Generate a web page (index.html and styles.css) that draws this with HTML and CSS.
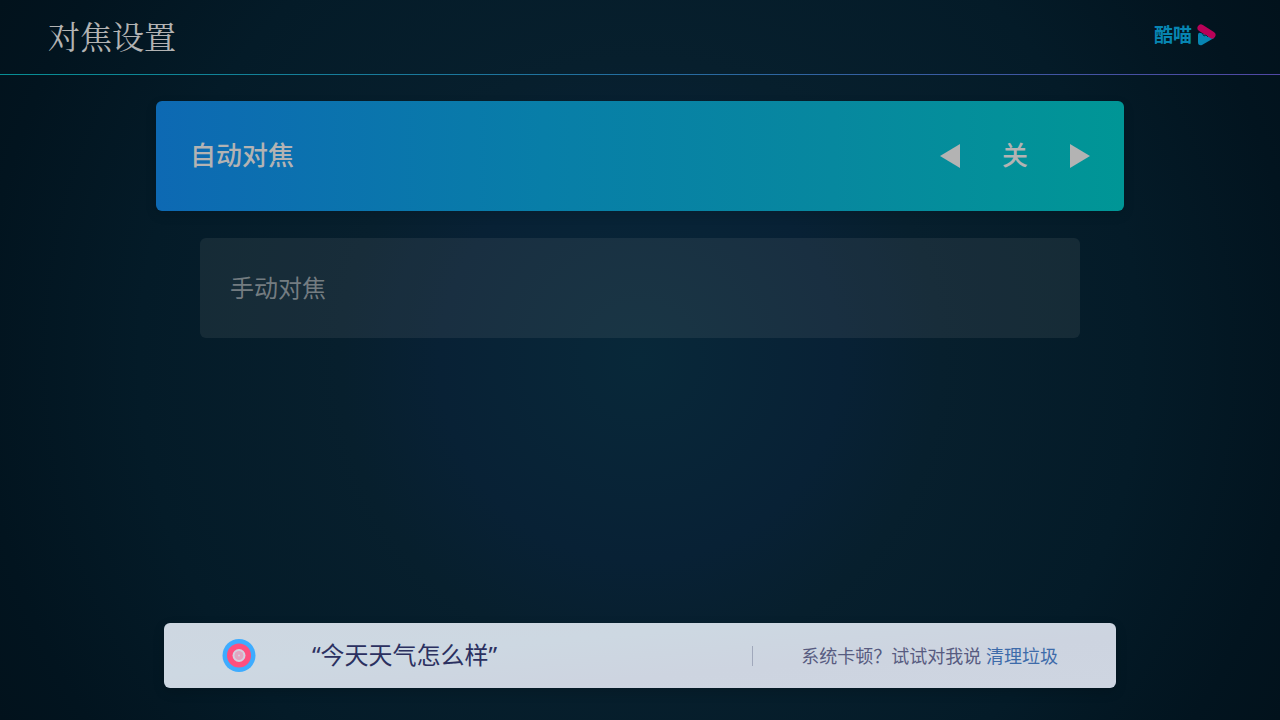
FILE: index.html
```html
<!DOCTYPE html>
<html lang="zh-CN">
<head>
    <meta charset="UTF-8">
    <meta name="viewport" content="width=device-width, initial-scale=1.0">
    <title>对焦设置</title>
    <link rel="stylesheet" href="styles.css">
</head>
<body>

    <header class="header">
        <h1 class="title">对焦设置</h1>
        <div class="brand">
            <span class="brand-name">酷喵</span>
            <svg class="brand-mark" width="20" height="22" viewBox="0 0 20 22" aria-hidden="true">
                <path d="M2 11 Q2 8 5 9 L18 14 L6 21 Q2 22 2 18 Z" fill="#0785b2"/>
                <path d="M5 4 L16 11" stroke="#b90258" stroke-width="7" stroke-linecap="round"/>
                <path d="M6 9 L8 12 L10 11 L12 13" fill="none" stroke="#04334a" stroke-width="1"/>
            </svg>
        </div>
    </header>

    <main class="settings">
        <div class="item active">
            <span class="item-label" id="autoFocusLabel">自动对焦</span>
            <div class="switcher" role="group" aria-labelledby="autoFocusLabel">
                <button type="button" class="arrow" aria-label="上一项">
                    <svg width="20" height="24" viewBox="0 0 20 24"><path d="M0 12 L20 0 V24 Z"/></svg>
                </button>
                <span class="value" id="autoFocusValue">关</span>
                <button type="button" class="arrow" aria-label="下一项">
                    <svg width="20" height="24" viewBox="0 0 20 24"><path d="M20 12 L0 0 V24 Z"/></svg>
                </button>
            </div>
        </div>

        <button type="button" class="item manual">手动对焦</button>
    </main>

    <!-- 语音助手提示 -->
    <footer class="voice-bar">
        <svg class="voice-icon" width="34" height="34" viewBox="0 0 34 34" aria-hidden="true">
            <circle cx="17" cy="16.5" r="16.5" fill="#3eacff"/>
            <circle cx="17" cy="16.5" r="12" fill="#ff4f7e"/>
            <circle cx="17" cy="16.5" r="6.5" fill="#d3d2e0"/>
            <circle cx="17" cy="16.5" r="4.5" fill="#e1a6c1"/>
            <circle cx="17" cy="16.5" r="1" fill="#d3d2e0"/>
        </svg>
        <p class="voice-text">“今天天气怎么样”</p>
        <p class="voice-tip">系统卡顿？试试对我说 <a href="#clean">清理垃圾</a></p>
    </footer>

    <script>
        const value = document.getElementById('autoFocusValue');
        document.querySelectorAll('.arrow').forEach(button => {
            button.addEventListener('click', () => {
                value.innerText = value.innerText === '关' ? '开' : '关';
            });
        });
    </script>
</body>
</html>
```

FILE: styles.css
```css
* {
    box-sizing: border-box;
}

body {
    margin: 0;
    min-height: 100vh;
    display: flex;
    flex-direction: column;
    font-family: "Noto Sans", "Noto Sans CJK SC", sans-serif;
    color: #b3b3b3;
    background: radial-gradient(circle at center, #082839 0%, #082135 200px, #071f2d 300px, #041b28 500px, #02141f 660px, #02121c 100%);
}

/* 顶部标题栏 */
.header {
    display: flex;
    align-items: center;
    justify-content: space-between;
    height: 75px;
    padding: 0 64px 4px 48px;
    border-bottom: 1px solid;
    border-image: linear-gradient(to right, #078e94, #246ea0 50%, #5148a5) 1;
}

.title {
    margin: 0;
    font-family: "Noto Serif CJK SC", "Noto Serif SC", serif;
    font-size: 32px;
    font-weight: 400;
    line-height: 40px;
}

.brand {
    display: flex;
    align-items: center;
    gap: 4px;
}

.brand-name {
    font-size: 19px;
    font-weight: 700;
    line-height: 24px;
    color: #0785b2;
}

/* 设置列表 */
.settings {
    flex: 1;
    display: flex;
    flex-direction: column;
    gap: 27px;
    padding: 26px 156px;
}

.item {
    display: flex;
    align-items: center;
    border-radius: 6px;
}

.active {
    justify-content: space-between;
    height: 110px;
    padding: 0 34px;
    font-size: 26px;
    font-weight: 500;
    line-height: 32px;
    background: linear-gradient(to right, #0d69b3, #087ea8 40%, #07889f 70%, #009696);
    box-shadow: 0 4px 12px rgba(0, 0, 0, 0.12);
}

.item-label,
.value {
    padding-bottom: 2px;
}

.manual {
    height: 100px;
    margin: 0 44px;
    padding: 0 30px 4px;
    border: none;
    font-family: inherit;
    font-size: 24px;
    color: rgba(179, 179, 179, 0.6);
    background: rgba(179, 179, 179, 0.1);
}

.switcher {
    display: flex;
    align-items: center;
    gap: 42px;
}

.arrow {
    display: flex;
    padding: 0;
    border: none;
    background: none;
    cursor: pointer;
}

.arrow svg {
    fill: #b3b3b3;
}

/* 底部语音栏 */
.voice-bar {
    display: flex;
    align-items: center;
    height: 65px;
    margin: 0 164px 32px;
    padding: 0 58px;
    border-radius: 6px;
    background: linear-gradient(175deg, #ced7e1, #cdd8e2 35%, #cdd4e0 65%, #ced5e1);
    box-shadow: 0 4px 12px rgba(0, 0, 0, 0.15);
}

.voice-text {
    flex: 1;
    margin: 0 0 0 56px;
    padding-bottom: 5px;
    font-size: 24px;
    color: #2b3060;
}

.voice-tip {
    margin: 0;
    padding-left: 48px;
    font-size: 18px;
    line-height: 20px;
    color: #575b80;
    border-left: 1px solid #a0a8bb;
}

.voice-tip a {
    color: #3d6baa;
    text-decoration: none;
}
```
